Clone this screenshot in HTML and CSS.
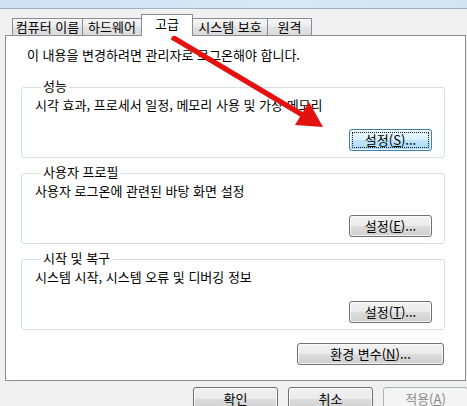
FILE: index.html
```html
<!DOCTYPE html>
<html lang="ko">
<head>
<meta charset="utf-8">
<title>시스템 속성</title>
<link rel="stylesheet" href="styles.css">
</head>
<body>
<div class="window">
  <div class="titlebar"></div>
  <div class="tabbar">
    <div class="tab tab-name">컴퓨터 이름</div>
    <div class="tab tab-hw">하드웨어</div>
    <div class="tab tab-adv tab-active">고급</div>
    <div class="tab tab-prot">시스템 보호</div>
    <div class="tab tab-remote">원격</div>
  </div>
  <div class="panel">
    <p class="notice">이 내용을 변경하려면 관리자로 로그온해야 합니다.</p>
    <fieldset class="group group-first">
      <legend>성능</legend>
      <p class="desc">시각 효과, 프로세서 일정, 메모리 사용 및 가상 메모리</p>
      <div class="group-actions">
        <button class="btn btn-focus"><span class="focus-ring">설정(<u>S</u>)...</span></button>
      </div>
    </fieldset>
    <fieldset class="group">
      <legend>사용자 프로필</legend>
      <p class="desc">사용자 로그온에 관련된 바탕 화면 설정</p>
      <div class="group-actions">
        <button class="btn">설정(<u>E</u>)...</button>
      </div>
    </fieldset>
    <fieldset class="group">
      <legend>시작 및 복구</legend>
      <p class="desc">시스템 시작, 시스템 오류 및 디버깅 정보</p>
      <div class="group-actions">
        <button class="btn">설정(<u>T</u>)...</button>
      </div>
    </fieldset>
    <div class="panel-actions">
      <button class="btn btn-wide">환경 변수(<u>N</u>)...</button>
    </div>
  </div>
  <div class="dialog-actions">
    <button class="btn btn-dialog">확인</button>
    <button class="btn btn-dialog">취소</button>
    <button class="btn btn-dialog" disabled>적용(<u>A</u>)</button>
  </div>
  <svg class="arrow" width="467" height="406" viewBox="0 0 467 406">
    <line x1="172" y1="37" x2="306" y2="117" stroke="#e3120f" stroke-width="5.5" stroke-linecap="butt"/>
    <polygon points="323,127 295,125 309,102" fill="#e3120f"/>
  </svg>
</div>
</body>
</html>
```

FILE: styles.css
```css
* { box-sizing: border-box; }

html, body {
  margin: 0;
  padding: 0;
}

body {
  width: 467px;
  height: 406px;
  overflow: hidden;
  background: #f0f0f0;
  font-family: "Noto Sans CJK KR", "Noto Sans", sans-serif;
  font-size: 13px;
  color: #000;
}

.window {
  position: relative;
  width: 467px;
  height: 406px;
}

.titlebar {
  height: 9px;
  background: linear-gradient(90deg, #cfe0f1, #d9e8f6 60%, #d3e3f2);
  border-bottom: 1px solid #9eb0c2;
}

.tabbar {
  display: flex;
  align-items: flex-end;
  height: 26px;
  padding-left: 12px;
}

.tab {
  height: 17px;
  border: 1px solid #898c95;
  border-bottom: none;
  margin-right: -1px;
  background: linear-gradient(#f7f7f7, #ebebeb 50%, #e2e2e2 51%, #dcdcdc);
  text-align: center;
  line-height: 15px;
  white-space: nowrap;
}

.tab-name { width: 71px; }
.tab-hw { width: 60px; }
.tab-adv { width: 52px; }
.tab-prot { width: 76px; }
.tab-remote { width: 45px; }

.tab-active {
  position: relative;
  z-index: 2;
  height: 22px;
  margin-bottom: -1px;
  background: #fff;
  line-height: 17px;
}

.panel {
  width: 461px;
  height: 346px;
  margin-left: 5px;
  border: 1px solid #898c95;
  background: #fff;
  padding: 11px 20px 0 15px;
  display: flex;
  flex-direction: column;
}

.notice {
  margin: 0 0 0 6px;
  line-height: 16px;
}

.group {
  margin: 6px 0 0;
  padding: 0 12px 6px 13px;
  border: 1px solid #d5dfe5;
  border-radius: 3px;
  min-inline-size: 0;
}

.group-first {
  margin-top: 15px;
}

.group legend {
  margin-left: 6px;
  padding: 0 2px 2px;
  line-height: 16px;
}

.desc {
  margin: 1px 0 0;
  line-height: 16px;
}

.group-actions {
  display: flex;
  justify-content: flex-end;
  margin-top: 16px;
}

.panel-actions {
  display: flex;
  justify-content: flex-end;
  margin-top: 13px;
  padding-right: 1px;
}

.btn {
  height: 22px;
  width: 83px;
  padding: 0;
  border: 1px solid #707070;
  border-radius: 3px;
  background: linear-gradient(#f2f2f2, #ebebeb 50%, #dddddd 51%, #cfcfcf);
  box-shadow: inset 0 0 0 1px rgba(255, 255, 255, 0.75);
  font: inherit;
  line-height: 18px;
  color: #000;
  text-align: center;
}

.btn u {
  text-underline-offset: 1px;
}

.btn-focus {
  border-color: #3c7fb1;
  background: linear-gradient(#eaf6fd, #d9f0fc 50%, #bee6fd 51%, #a7d9f5);
  padding: 2px;
}

.focus-ring {
  display: block;
  height: 16px;
  line-height: 14px;
  border: 1px dotted #1b1b1b;
}

.btn-wide {
  width: 147px;
}

.dialog-actions {
  display: flex;
  justify-content: flex-end;
  gap: 10px;
  margin-top: 6px;
  margin-right: -1px;
}

.btn-dialog {
  width: 85px;
  height: 23px;
}

.btn-dialog:disabled {
  border-color: #adb2b5;
  background: #f4f4f4;
  box-shadow: none;
  color: #8a8a8a;
}

.arrow {
  position: absolute;
  left: 0;
  top: 0;
  pointer-events: none;
}
```
